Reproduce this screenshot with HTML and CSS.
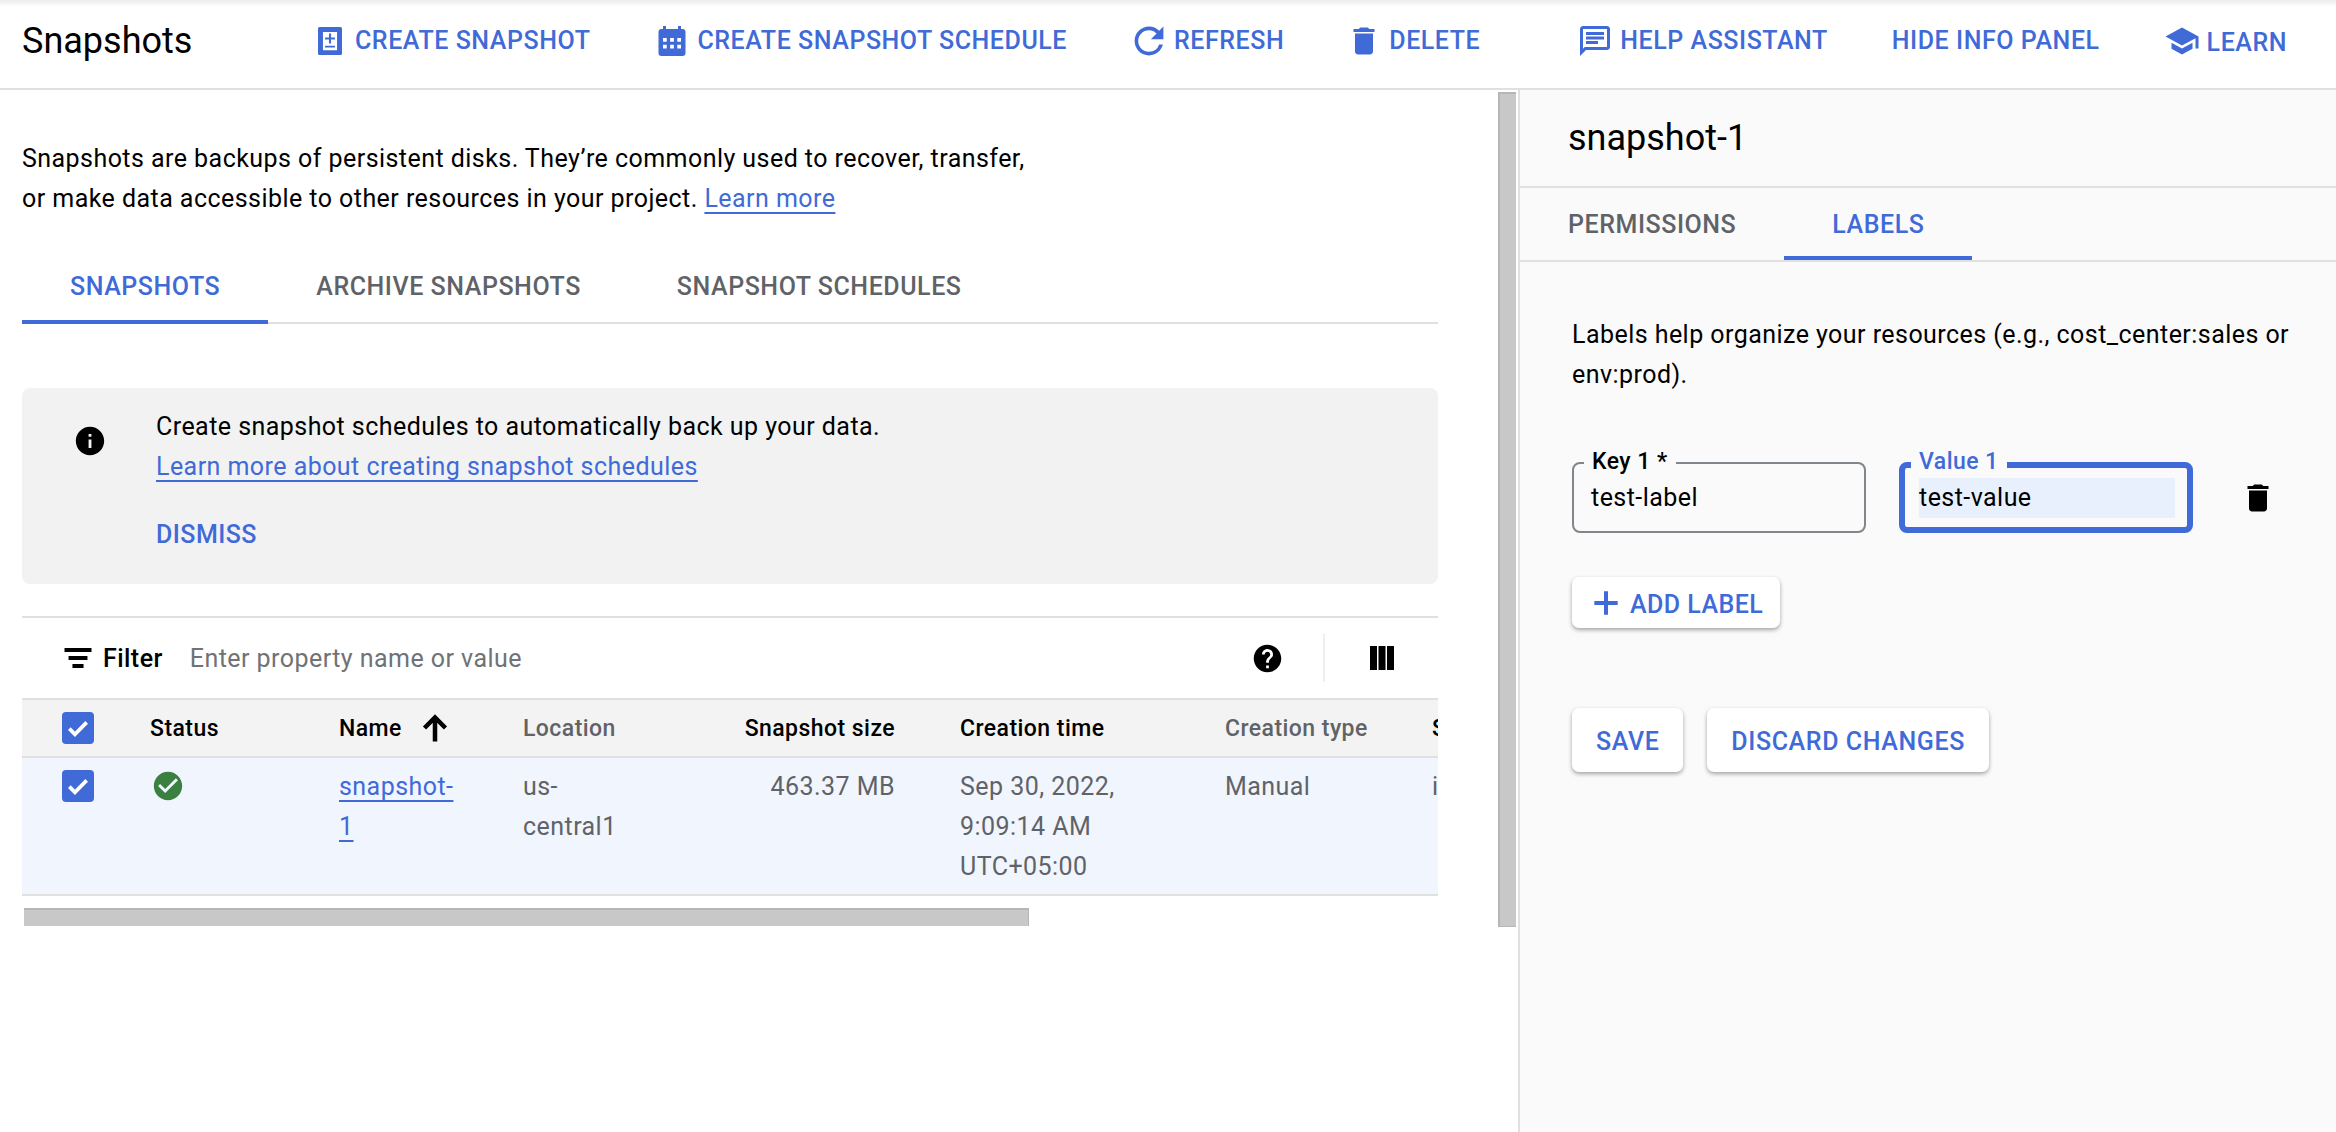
FILE: index.html
```html
<!DOCTYPE html>
<html lang="en">
<head>
<meta charset="utf-8">
<title>Snapshots</title>
<link rel="stylesheet" href="styles.css">
</head>
<body>
<header class="topbar">
  <h1 class="page-title">Snapshots</h1>
  <nav class="actions">
    <a class="action"><svg class="icon36" viewBox="0 0 24 24"><path fill-rule="evenodd" d="M5 2.700h14a1 1 0 0 1 1 1v16.600a1 1 0 0 1-1 1H5a1 1 0 0 1-1-1V3.700a1 1 0 0 1 1-1zM7.300 6v12.200h9.400V6zM11.300 7h1.400v2.600h2.600V11h-2.600v2.600h-1.400V11H8.700V9.600h2.600zM8.700 15.100h6.600v1.300H8.700z"/></svg>CREATE SNAPSHOT</a>
    <a class="action"><svg class="icon36" viewBox="0 0 24 24"><path fill-rule="evenodd" d="M19 4h-1V2h-2v2H8V2H6v2H5a2 2 0 0 0-2 2v14a2 2 0 0 0 2 2h14a2 2 0 0 0 2-2V6a2 2 0 0 0-2-2zM6 10v2.500h2.500V10zM10.750 10v2.500h2.500V10zM15.500 10v2.500H18V10zM6 14.500V17h2.500v-2.500zM10.750 14.500V17h2.500v-2.500zM15.500 14.500V17H18v-2.500z"/></svg>CREATE SNAPSHOT SCHEDULE</a>
    <a class="action action-refresh"><svg class="icon36" viewBox="2 2 20 20"><path d="M17.650 6.350A7.958 7.958 0 0 0 12 4c-4.420 0-7.990 3.580-7.990 8s3.570 8 7.990 8c3.730 0 6.840-2.550 7.730-6h-2.080A5.990 5.990 0 0 1 12 18c-3.310 0-6-2.690-6-6s2.690-6 6-6c1.660 0 3.140.69 4.220 1.780L13 11h7V4l-2.350 2.350z"/></svg>REFRESH</a>
    <a class="action"><svg class="icon36" viewBox="0 0 24 24"><path d="M6 19c0 1.100.9 2 2 2h8c1.100 0 2-.9 2-2V7H6v12zM19 4h-3.500l-1-1h-5l-1 1H5v2h14V4z"/></svg>DELETE</a>
    <a class="action action-help"><svg class="icon36" viewBox="0 0 24 24"><path d="M20 2H4c-1.100 0-1.990.9-1.990 2L2 22l4-4h14c1.100 0 2-.9 2-2V4c0-1.100-.9-2-2-2zm0 14H5.170L4 17.170V4h16v12zM6 12h8v2H6zM6 9h12v2H6zM6 6h12v2H6z"/></svg>HELP ASSISTANT</a>
    <a class="action">HIDE INFO PANEL</a>
    <a class="action action-learn"><svg class="icon36" viewBox="0 0 24 24"><path d="M5 13.180v4L12 21l7-3.820v-4L12 17l-7-3.820zM12 3L1 9l11 6 9-4.910V17h2V9L12 3z"/></svg><span class="learn-text">LEARN</span></a>
  </nav>
</header>
<div class="workspace">
  <main class="left-pane">
    <div class="content">
      <p class="intro">Snapshots are backups of persistent disks. They’re commonly used to recover, transfer,<br>or make data accessible to other resources in your project. <a class="link">Learn more</a></p>
      <div class="tabs">
        <a class="tab tab-active">SNAPSHOTS</a>
        <a class="tab">ARCHIVE SNAPSHOTS</a>
        <a class="tab">SNAPSHOT SCHEDULES</a>
      </div>
      <section class="notice">
        <svg class="notice-icon" viewBox="0 0 24 24"><path d="M12 2C6.480 2 2 6.480 2 12s4.480 10 10 10 10-4.480 10-10S17.520 2 12 2zm1 15h-2v-6h2v6zm0-8h-2V7h2v2z"/></svg>
        <div>
          <p class="notice-text">Create snapshot schedules to automatically back up your data.<br><a class="link">Learn more about creating snapshot schedules</a></p>
          <a class="dismiss">DISMISS</a>
        </div>
      </section>
      <div class="table-wrap">
        <div class="filter-bar">
          <svg class="filter-icon" viewBox="0 0 24 24"><path d="M3 5.300h18V8H3zM5.700 10.700h12.600v2.700H5.700zM8.300 16h7.400v2.700H8.300z"/></svg>
          <span class="filter-label">Filter</span>
          <span class="filter-placeholder">Enter property name or value</span>
          <svg class="help-icon" viewBox="0 0 24 24"><path d="M12 2C6.480 2 2 6.480 2 12s4.480 10 10 10 10-4.480 10-10S17.520 2 12 2zm1 17h-2v-2h2v2zm2.070-7.750l-.9.92C13.450 12.900 13 13.500 13 15h-2v-.5c0-1.100.45-2.100 1.170-2.830l1.240-1.260c.37-.36.59-.86.59-1.410 0-1.100-.9-2-2-2s-2 .9-2 2H8c0-2.210 1.790-4 4-4s4 1.790 4 4c0 .88-.36 1.680-.93 2.250z"/></svg>
          <span class="filter-divider"></span>
          <svg class="columns-icon" viewBox="0 0 24 24"><path d="M0 0h7v24H0zM8.500 0h7v24h-7zM17 0h7v24h-7z"/></svg>
        </div>
        <div class="tr thead">
          <span class="checkbox"><svg class="check" viewBox="0 0 24 24"><path d="M5.500 12.500l4.200 4.200 8.800-8.900"/></svg></span>
          <span class="th">Status</span>
          <span class="th th-sort">Name<svg class="sort-icon" viewBox="0 0 24 24"><path d="M12 21V5M5 12l7-7 7 7"/></svg></span>
          <span class="th th-muted">Location</span>
          <span class="th th-right">Snapshot size</span>
          <span class="th">Creation time</span>
          <span class="th th-muted">Creation type</span>
          <span class="th">Source disk</span>
        </div>
        <div class="tr tbody">
          <span class="checkbox"><svg class="check" viewBox="0 0 24 24"><path d="M5.500 12.500l4.200 4.200 8.800-8.900"/></svg></span>
          <span class="td"><svg class="status-icon" viewBox="0 0 24 24"><path d="M12 2C6.480 2 2 6.480 2 12s4.480 10 10 10 10-4.480 10-10S17.520 2 12 2zm-2 15l-5-5 1.410-1.410L10 14.170l7.590-7.590L19 8l-9 9z"/></svg></span>
          <span class="td"><a class="link">snapshot-<br>1</a></span>
          <span class="td">us-<br>central1</span>
          <span class="td td-right">463.37 MB</span>
          <span class="td">Sep 30, 2022,<br>9:09:14 AM<br>UTC+05:00</span>
          <span class="td">Manual</span>
          <span class="td">instance</span>
        </div>
      </div>
      <div class="h-scroll"></div>
    </div>
    <div class="v-scroll"></div>
  </main>
  <aside class="info-panel">
    <h2 class="panel-title">snapshot-1</h2>
    <div class="panel-tabs">
      <a class="panel-tab">PERMISSIONS</a>
      <a class="panel-tab panel-tab-active">LABELS</a>
    </div>
    <div class="panel-body">
      <p class="panel-text">Labels help organize your resources (e.g., cost_center:sales or<br>env:prod).</p>
      <div class="fields">
        <div class="field">
          <span class="field-label">Key 1 *</span>
          <span class="field-value">test-label</span>
        </div>
        <div class="field field-focus">
          <span class="field-label">Value 1</span>
          <span class="field-value">test-value</span>
        </div>
        <svg class="field-trash" viewBox="0 0 24 24"><path d="M6 19c0 1.100.9 2 2 2h8c1.100 0 2-.9 2-2V7H6v12zM19 4h-3.500l-1-1h-5l-1 1H5v2h14V4z"/></svg>
      </div>
      <button class="btn btn-add"><svg class="plus-icon" viewBox="0 0 24 24"><path d="M19 13.200h-5.800V19h-2.400v-5.800H5v-2.400h5.800V5h2.400v5.800H19z"/></svg>ADD LABEL</button>
      <div class="form-actions">
        <button class="btn">SAVE</button>
        <button class="btn">DISCARD CHANGES</button>
      </div>
    </div>
  </aside>
</div>
</body>
</html>
```

FILE: styles.css
```css
* { box-sizing: border-box; }
html, body { margin: 0; height: 100%; }
body {
  font-family: Roboto, "Liberation Sans", sans-serif;
  font-size: 25px;
  letter-spacing: .45px;
  line-height: 40px;
  color: #000;
  background: #fff;
  overflow: hidden;
  display: flex;
  flex-direction: column;
}
p, h1, h2 { margin: 0; font-weight: 400; }
svg { display: block; fill: currentColor; flex: none; }

.topbar {
  height: 90px;
  flex: none;
  display: flex;
  align-items: center;
  padding: 0 0 6px 22px;
  border-bottom: 2px solid #e0e0e0;
  background: linear-gradient(#ececec, #fff 7px);
}
.page-title { font-size: 36px; letter-spacing: 0; width: 290px; flex: none; }
.actions { display: flex; align-items: center; color: #3f6ad8; }
.action {
  display: flex;
  align-items: center;
  gap: 7px;
  font-weight: 500;
  letter-spacing: .55px;
  margin-right: 64px;
  white-space: nowrap;
}
.action-refresh { margin-right: 62px; }
.action-help { margin-left: 33px; }
.action-learn { margin-right: 0; }
.learn-text { margin-top: 4px; }
.icon36 { width: 36px; height: 36px; }

.workspace { flex: 1; display: flex; min-height: 0; }
.left-pane { width: 1518px; flex: none; display: flex; align-items: flex-start; }
.content { width: 1498px; flex: none; padding: 49px 60px 0 22px; }
.v-scroll { width: 18px; height: 835px; margin-top: 2px; background: #c8c8c8; border: 2px solid #b6b6b6; border-right: 0; border-bottom-width: 1px; }
.link { color: #3f6ad8; text-decoration: underline; text-decoration-thickness: 2px; text-underline-offset: 5px; text-decoration-skip-ink: none; }

.tabs { display: flex; margin-top: 29px; height: 76px; border-bottom: 2px solid #e0e0e0; font-weight: 500; letter-spacing: .55px; color: #5f6368; }
.tab { padding: 2px 48px 0; height: 76px; display: flex; align-items: center; }
.tab-active { color: #3f6ad8; border-bottom: 4px solid #3f6ad8; padding-top: 6px; }

.notice { margin-top: 64px; height: 196px; background: #f2f2f2; border-radius: 8px; display: flex; padding: 19px 0 0 51px; }
.notice-icon { width: 34px; height: 34px; margin: 17px 0 0 0; }
.notice > div { margin-left: 49px; }
.dismiss { display: block; margin-top: 28px; color: #3f6ad8; font-weight: 500; }

.table-wrap { margin-top: 32px; border-top: 2px solid #e0e0e0; overflow: hidden; }
.filter-bar { height: 80px; display: flex; align-items: center; padding-left: 38px; }
.filter-icon { width: 36px; height: 36px; }
.filter-label { font-weight: 500; margin-left: 7px; padding-top: 2px; }
.filter-placeholder { color: #6f7276; margin-left: 27px; padding-top: 2px; flex: 1; }
.help-icon { width: 33px; height: 33px; margin-right: 39px; }
.filter-divider { width: 2px; height: 48px; background: #eeeeee; margin-right: 45px; }
.columns-icon { width: 24px; height: 24px; margin-right: 44px; }

.tr {
  display: grid;
  grid-template-columns: 88px 189px 184px 151px 286px 265px 207px 100px;
  padding-left: 40px;
  width: 1600px;
  border-top: 2px solid #e0e0e0;
}
.thead { height: 58px; background: #f3f3f3; align-items: center; }
.tbody { height: 140px; background: #f1f5fe; padding-top: 9px; border-bottom: 2px solid #e0e0e0; }
.th { font-size: 23px; font-weight: 500; white-space: nowrap; padding-top: 2px; }
.th-muted { color: #5f6368; }
.th-sort { display: flex; align-items: center; gap: 15px; }
.th-right { text-align: right; padding-right: 65px; }
.sort-icon { width: 36px; height: 36px; margin-top: -2px; fill: none; stroke: currentColor; stroke-width: 3; }
.td { color: #5f6368; white-space: nowrap; }
.td-right { text-align: right; padding-right: 65px; }
.checkbox { width: 32px; height: 32px; background: #3f6ad8; border-radius: 4px; color: #fff; }
.check { fill: none; stroke: currentColor; stroke-width: 2.800; }
.tbody .checkbox { margin-top: 3px; }
.status-icon { width: 34px; height: 34px; color: #3a8040; margin: 2px 0 0 1px; }

.h-scroll { margin: 12px 0 0 2px; width: 1005px; height: 18px; background: #c8c8c8; border-top: 2px solid #b6b6b6; border-right: 1px solid #b6b6b6; }

.info-panel { flex: 1; background: #fafafa; border-left: 2px solid #e0e0e0; min-width: 0; }
.panel-title { height: 98px; font-size: 36px; letter-spacing: 0; padding: 0 0 0 48px; display: flex; align-items: center; border-bottom: 2px solid #e0e0e0; }
.panel-tabs { display: flex; height: 74px; border-bottom: 2px solid #e0e0e0; font-weight: 500; letter-spacing: .55px; color: #5f6368; }
.panel-tab { padding: 2px 48px 0; height: 72px; display: flex; align-items: center; }
.panel-tab-active { color: #3f6ad8; border-bottom: 4px solid #3f6ad8; padding-top: 6px; }
.panel-body { padding: 53px 0 0 52px; }
.fields { display: flex; align-items: center; margin-top: 67px; }
.field { position: relative; width: 294px; height: 71px; border: 2px solid #80868b; border-radius: 8px; padding-left: 17px; display: flex; align-items: center; }
.field-label { position: absolute; left: 10px; top: -22px; padding: 0 8px; background: #fafafa; font-size: 23px; font-weight: 500; line-height: 40px; height: 30px; }
.field-focus { margin-left: 33px; border: 6px solid #3f6ad8; padding-left: 14px; }
.field-focus .field-label { left: 6px; top: -26px; color: #3f6ad8; }
.field-focus .field-value { width: 256px; background: #e8f0fe; display: block; }
.field-trash { width: 36px; height: 36px; margin-left: 47px; }

.btn {
  display: flex;
  align-items: center;
  font: 500 25px Roboto, "Liberation Sans", sans-serif;
  letter-spacing: .6px;
  color: #3f6ad8;
  background: #fff;
  border: 0;
  border-radius: 7px;
  padding: 2px 24px 0;
  height: 64px;
  box-shadow: 0 2px 4px rgba(0,0,0,.35);
}
.btn-add { height: 51px; margin-top: 44px; padding: 4px 17px 0 14px; gap: 4px; letter-spacing: .45px; }
.plus-icon { width: 40px; height: 40px; margin-top: -4px; }
.form-actions { display: flex; gap: 24px; margin-top: 80px; }
```
